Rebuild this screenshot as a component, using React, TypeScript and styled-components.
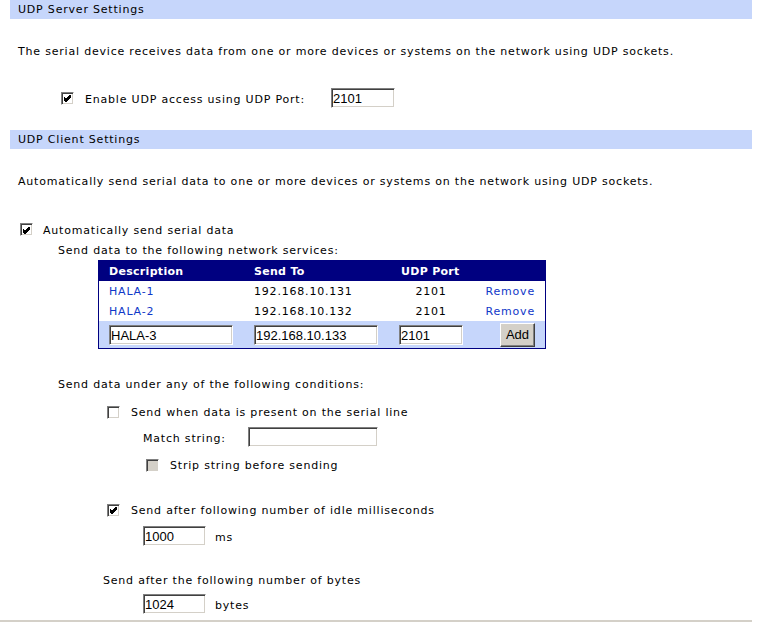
import styled, { createGlobalStyle } from "styled-components";

const GlobalStyle = createGlobalStyle`
  body {
    margin: 0;
    background: #ffffff;
    font-family: "DejaVu Sans", Verdana, sans-serif;
    font-size: 11px;
    letter-spacing: 0.8px;
    color: #000000;
  }
`;

type Service = { description: string; sendTo: string; port: string };

const services: Service[] = [
  { description: "HALA-1", sendTo: "192.168.10.131", port: "2101" },
  { description: "HALA-2", sendTo: "192.168.10.132", port: "2101" },
];

const CheckBox = ({ checked, disabled }: { checked?: boolean; disabled?: boolean }) => (
  <Box $disabled={disabled}>
    {checked && (
      <svg width="9" height="9" viewBox="0 0 9 9">
        <path d="M1 3.5 L3 5.5 L7.5 1 M1 4.5 L3 6.5 L7.5 2 M1 5.5 L3 7.5 L7.5 3" stroke="#000" strokeWidth="1" fill="none" shapeRendering="crispEdges" />
      </svg>
    )}
  </Box>
);

const App = () => {
  return (
    <>
      <GlobalStyle />
      <Page>
        <SectionHeader>UDP Server Settings</SectionHeader>
        <Intro>The serial device receives data from one or more devices or systems on the network using UDP sockets.</Intro>
        <ServerRow>
          <CheckBox checked />
          <ServerLabel>Enable UDP access using UDP Port:</ServerLabel>
          <TextInput $width={64} defaultValue="2101" />
        </ServerRow>

        <SectionHeader $top={22}>UDP Client Settings</SectionHeader>
        <Intro>Automatically send serial data to one or more devices or systems on the network using UDP sockets.</Intro>

        <AutoRow>
          <CheckBox checked />
          <span>Automatically send serial data</span>
        </AutoRow>
        <Line $indent={48} $top={1}>Send data to the following network services:</Line>

        <ServiceTable>
          <HeadCell>Description</HeadCell>
          <HeadCell>Send To</HeadCell>
          <HeadCell $indent={12}>UDP Port</HeadCell>
          <HeadCell />
          {services.map((s) => (
            <Row key={s.description}>
              <Cell>
                <Link>{s.description}</Link>
              </Cell>
              <Cell>{s.sendTo}</Cell>
              <Cell $center>{s.port}</Cell>
              <Cell $right>
                <Link>Remove</Link>
              </Cell>
            </Row>
          ))}
          <AddRow>
            <AddCell>
              <TextInput $width={124} defaultValue="HALA-3" />
            </AddCell>
            <AddCell>
              <TextInput $width={124} defaultValue="192.168.10.133" />
            </AddCell>
            <AddCell>
              <TextInput $width={64} defaultValue="2101" />
            </AddCell>
            <AddCell $right>
              <Button>Add</Button>
            </AddCell>
          </AddRow>
        </ServiceTable>

        <Line $indent={48} $top={25}>Send data under any of the following conditions:</Line>

        <CheckRow $indent={97} $top={8}>
          <CheckBox />
          <span>Send when data is present on the serial line</span>
        </CheckRow>
        <FieldRow $indent={133} $top={5}>
          <MatchLabel>Match string:</MatchLabel>
          <TextInput $width={130} defaultValue="" />
        </FieldRow>
        <CheckRow $indent={136} $top={8}>
          <CheckBox disabled />
          <span>Strip string before sending</span>
        </CheckRow>

        <CheckRow $indent={97} $top={25}>
          <CheckBox checked />
          <span>Send after following number of idle milliseconds</span>
        </CheckRow>
        <FieldRow $indent={133} $top={6}>
          <TextInput $width={63} defaultValue="1000" />
          <Unit>ms</Unit>
        </FieldRow>

        <Line $indent={93} $top={24}>Send after the following number of bytes</Line>
        <FieldRow $indent={133} $top={4}>
          <TextInput $width={63} defaultValue="1024" />
          <Unit>bytes</Unit>
        </FieldRow>
      </Page>
      <Footer />
    </>
  );
};

const Page = styled.div`
  width: 742px;
  padding-left: 10px;
`;

const SectionHeader = styled.div<{ $top?: number }>`
  height: 19px;
  line-height: 20px;
  margin-top: ${(p) => p.$top ?? 0}px;
  padding-left: 8px;
  background: #c6d6fb;
  color: #000000;
`;

const Intro = styled.div`
  margin-top: 26px;
  padding-left: 8px;
  line-height: 14px;
`;

const ServerRow = styled.div`
  display: flex;
  align-items: center;
  height: 20px;
  margin-top: 29px;
  padding-left: 51px;
`;

const ServerLabel = styled.span`
  margin-left: 11px;
  padding-top: 2px;
  width: 246px;
`;

const AutoRow = styled.div`
  display: flex;
  align-items: center;
  gap: 10px;
  height: 20px;
  margin-top: 30px;
  padding-left: 10px;
  span {
    padding-top: 2px;
  }
`;

const Line = styled.div<{ $indent: number; $top?: number }>`
  height: 20px;
  line-height: 22px;
  padding-left: ${(p) => p.$indent}px;
  margin-top: ${(p) => p.$top ?? 0}px;
`;

const CheckRow = styled.div<{ $indent: number; $top?: number }>`
  display: flex;
  align-items: center;
  gap: 11px;
  height: 20px;
  padding-left: ${(p) => p.$indent}px;
  margin-top: ${(p) => p.$top ?? 0}px;
  span {
    padding-top: 1px;
  }
`;

const FieldRow = styled.div<{ $indent: number; $top?: number }>`
  display: flex;
  align-items: center;
  height: 20px;
  padding-left: ${(p) => p.$indent}px;
  margin-top: ${(p) => p.$top ?? 0}px;
`;

const MatchLabel = styled.span`
  width: 105px;
  padding-top: 2px;
`;

const Unit = styled.span`
  margin-left: 9px;
  padding-top: 2px;
`;

const Box = styled.span<{ $disabled?: boolean }>`
  box-sizing: border-box;
  width: 13px;
  height: 13px;
  flex: none;
  display: inline-flex;
  align-items: center;
  justify-content: center;
  border: 1px solid;
  border-color: #808080 #ffffff #ffffff #808080;
  box-shadow: inset 1px 1px 0 #404040, inset -1px -1px 0 #d4d0c8;
  background: ${(p) => (p.$disabled ? "#d4d0c8" : "#ffffff")};
`;

const TextInput = styled.input<{ $width: number }>`
  box-sizing: border-box;
  width: ${(p) => p.$width}px;
  height: 20px;
  margin: 0;
  padding: 1px 1px 0;
  border: 1px solid;
  border-color: #808080 #ffffff #ffffff #808080;
  box-shadow: inset 1px 1px 0 #404040, inset -1px -1px 0 #d4d0c8;
  background: #ffffff;
  font-family: "Liberation Sans", Arial, sans-serif;
  font-size: 13px;
  letter-spacing: 0;
  color: #000000;
  outline: none;
`;

const ServiceTable = styled.div`
  display: grid;
  grid-template-columns: 145px 145px 85px 71px;
  width: 446px;
  margin-left: 88px;
  margin-top: 0;
  border: 1px solid #000080;
`;

const HeadCell = styled.div<{ $indent?: number }>`
  height: 20px;
  line-height: 21px;
  padding-left: ${(p) => p.$indent ?? 10}px;
  background: #000080;
  color: #ffffff;
  font-weight: bold;
  letter-spacing: 0.3px;
`;

const Row = styled.div`
  display: contents;
`;

const AddRow = styled.div`
  display: contents;
`;

const Cell = styled.div<{ $center?: boolean; $right?: boolean }>`
  height: 20px;
  line-height: 22px;
  padding: ${(p) => (p.$center ? "0 11px 0 10px" : p.$right ? "0 10px 0 0" : "0 0 0 10px")};
  text-align: ${(p) => (p.$center ? "center" : p.$right ? "right" : "left")};
`;

const AddCell = styled.div<{ $right?: boolean }>`
  display: flex;
  align-items: center;
  justify-content: ${(p) => (p.$right ? "flex-end" : "flex-start")};
  height: 27px;
  padding: ${(p) => (p.$right ? "0 10px 0 0" : "0 0 0 10px")};
  background: #c6d6fb;
`;

const Link = styled.span`
  color: #1038c8;
  cursor: pointer;
`;

const Button = styled.button`
  box-sizing: border-box;
  width: 35px;
  height: 24px;
  margin: 0;
  padding: 0;
  border: 1px solid;
  border-color: #ffffff #404040 #404040 #ffffff;
  box-shadow: inset -1px -1px 0 #808080, inset 1px 1px 0 #d4d0c8;
  background: #d4d0c8;
  font-family: "Liberation Sans", Arial, sans-serif;
  font-size: 13px;
  letter-spacing: 0;
  color: #000000;
`;

const Footer = styled.div`
  width: 752px;
  margin-top: 6px;
  border-top: 2px solid #d4d0c8;
`;

export default App;
